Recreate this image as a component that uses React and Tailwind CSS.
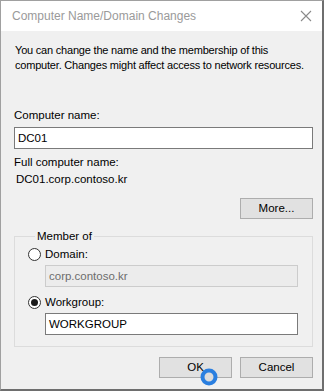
import React from 'react';

const font = { fontFamily: '"Liberation Sans", Arial, sans-serif' };

// Win32-style radio button drawn with CSS
const Radio = ({ checked, label }) => (
  <div className="flex items-center h-[15px]">
    <span className="w-[13px] h-[13px] rounded-full border border-[#333333] bg-white flex items-center justify-center">
      {checked && <span className="w-[7px] h-[7px] rounded-full bg-[#1a1a1a]"></span>}
    </span>
    <span className="ml-[4px]">{label}</span>
  </div>
);

const Button = ({ children, className = '' }) => (
  <button className={`h-[21px] w-[73px] bg-[#e1e1e1] border border-[#adadad] text-[11.5px] text-black ${className}`}>
    {children}
  </button>
);

export default function App() {
  return (
    <div
      className="relative w-[324px] h-[391px] bg-[#f0f0f0] border-l border-t border-[#a0a0a0] border-r-2 border-b-2 border-r-[#6e6e6e] border-b-[#6e6e6e] overflow-hidden text-[11.5px] leading-[15px] text-black"
      style={font}
    >
      {/* Title bar */}
      <div className="h-[30px] bg-white flex items-center justify-between pl-[11px] pr-[7px]">
        <span className="text-[12px] text-[#9a9a9a]">Computer Name/Domain Changes</span>
        <svg width="16" height="16" viewBox="0 0 16 16" className="mr-[1px]">
          <path d="M3 3 L13 13 M13 3 L3 13" stroke="#8a8a8a" strokeWidth="1.1" />
        </svg>
      </div>

      <div className="pl-[13px] pr-[9px] pt-[12px]">
        <p className="whitespace-nowrap text-[11px] tracking-[-0.2px] pl-[1px]">
          You can change the name and the membership of this
          <br />
          computer. Changes might affect access to network resources.
        </p>

        <div className="mt-[35px]">Computer name:</div>
        <div className="mt-[4px] h-[22px] border border-[#7a7a7a] bg-white flex items-center pl-[3px]">DC01</div>

        <div className="mt-[6px]">Full computer name:</div>
        <div className="mt-[2px] pl-[2px]">DC01.corp.contoso.kr</div>

        <div className="flex justify-end mt-[11px]">
          <Button className="w-[72px]">More...</Button>
        </div>

        <fieldset className="mt-[10px] border border-[#dcdcdc] pl-[13px] pr-[14px] pb-[11px]">
          <legend className="ml-[7px] px-[2px]">Member of</legend>
          <div className="mt-[3px]">
            <Radio label="Domain:" />
          </div>
          <div className="mt-[3px] ml-[17px] h-[22px] border border-[#cccccc] bg-[#ececec] text-[#6d6d6d] flex items-center pl-[3px]">
            corp.contoso.kr
          </div>
          <div className="mt-[8px]">
            <Radio checked label="Workgroup:" />
          </div>
          <div className="mt-[3px] ml-[17px] h-[22px] border border-[#7a7a7a] bg-white flex items-center pl-[3px]">
            WORKGROUP
          </div>
        </fieldset>

        <div className="flex justify-end gap-[8px] mt-[10px]">
          <Button>OK</Button>
          <Button>Cancel</Button>
        </div>
      </div>

      {/* mouse click indicator */}
      <svg width="22" height="22" viewBox="0 0 22 22" className="absolute left-[197px] top-[365px]">
        <circle cx="11" cy="11" r="6.5" fill="#dcdcdc" stroke="#2a7fe0" strokeWidth="4" />
      </svg>
    </div>
  );
}
